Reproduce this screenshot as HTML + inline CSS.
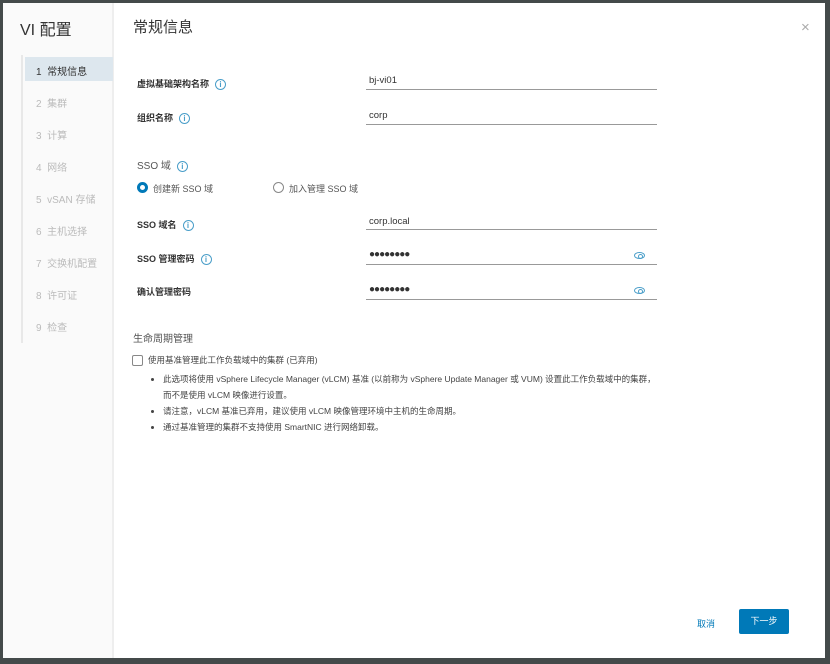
<!DOCTYPE html>
<html><head><meta charset="utf-8"><style>
*{margin:0;padding:0;box-sizing:border-box}
body{width:830px;height:664px;background:#444a4a;position:relative;overflow:hidden;font-family:"Liberation Sans","Noto Sans CJK SC",sans-serif;color:#333}
#dlg{position:absolute;left:3px;top:3px;width:822px;height:655px;background:#fff;overflow:hidden}
#in{position:absolute;left:-3px;top:-3px;width:830px;height:664px}
#side{position:absolute;left:3px;top:3px;width:111px;height:655px;background:#fafafa;border-right:2px solid #eee}
.a{position:absolute;white-space:nowrap}
.nav{position:absolute;left:33px;font-size:10px;color:#bbb}
.lbl{font-size:9px;font-weight:bold;color:#333}
.info{display:inline-block;width:11px;height:11px;border:1.3px solid #4a9ec9;border-radius:50%;color:#4a9ec9;font-size:8px;line-height:9px;text-align:center;vertical-align:middle;margin-left:6px;font-weight:bold}
.inp{position:absolute;left:366px;width:291px;height:1px;background:#999}
.val{position:absolute;left:369px;font-size:9.5px;color:#333}
.eye{position:absolute;left:634px;width:11px;height:7px;border:1.3px solid #4a9ec9;border-radius:50%}
.eye:after{content:"";position:absolute;left:2.5px;top:0.5px;width:3px;height:3px;border:1px solid #4a9ec9;border-radius:50%}
li{font-size:8.5px;color:#444;line-height:16px}
</style></head><body>
<div id="dlg"><div id="in">
<div id="side"></div>
<div class="a" style="left:20px;top:16px;font-size:16px;color:#333">VI 配置</div>
<div class="a" style="left:21px;top:55px;width:2px;height:288px;background:#e8e8e8"></div>
<div class="a" style="left:25px;top:57px;width:88px;height:24px;background:#dde7ee"></div>
<div class="nav" style="top:63px;color:#333;left:36px">1&nbsp;&nbsp;常规信息</div>
<div class="nav" style="top:95px;left:36px">2&nbsp;&nbsp;集群</div>
<div class="nav" style="top:127px;left:36px">3&nbsp;&nbsp;计算</div>
<div class="nav" style="top:159px;left:36px">4&nbsp;&nbsp;网络</div>
<div class="nav" style="top:191px;left:36px">5&nbsp;&nbsp;vSAN 存储</div>
<div class="nav" style="top:223px;left:36px">6&nbsp;&nbsp;主机选择</div>
<div class="nav" style="top:255px;left:36px">7&nbsp;&nbsp;交换机配置</div>
<div class="nav" style="top:287px;left:36px">8&nbsp;&nbsp;许可证</div>
<div class="nav" style="top:319px;left:36px">9&nbsp;&nbsp;检查</div>
<div class="a" style="left:133px;top:16px;font-size:15px;color:#333">常规信息</div>
<div class="a" style="left:801px;top:19px;font-size:15px;color:#aaa">×</div>

<div class="a lbl" style="left:137px;top:77px">虚拟基础架构名称<span class="info">i</span></div>
<div class="val" style="top:75px">bj-vi01</div><div class="inp" style="top:89px"></div>
<div class="a lbl" style="left:137px;top:111px">组织名称<span class="info">i</span></div>
<div class="val" style="top:110px">corp</div><div class="inp" style="top:124px"></div>

<div class="a" style="left:137px;top:157px;font-size:10px;color:#555">SSO 域<span class="info">i</span></div>
<div class="a" style="left:137px;top:182px;width:11px;height:11px;border-radius:50%;border:3.5px solid #0079b8"></div>
<div class="a" style="left:153px;top:182px;font-size:9px;color:#555">创建新 SSO 域</div>
<div class="a" style="left:273px;top:182px;width:11px;height:11px;border-radius:50%;border:1px solid #888"></div>
<div class="a" style="left:289px;top:182px;font-size:9px;color:#555">加入管理 SSO 域</div>

<div class="a lbl" style="left:137px;top:218px">SSO 域名<span class="info">i</span></div>
<div class="val" style="top:216px">corp.local</div><div class="inp" style="top:229px"></div>
<div class="a lbl" style="left:137px;top:252px">SSO 管理密码<span class="info">i</span></div>
<div class="val" style="top:249px;font-size:10px;letter-spacing:-1px">●●●●●●●●</div><div class="eye" style="top:252px"></div><div class="inp" style="top:264px"></div>
<div class="a lbl" style="left:137px;top:285px">确认管理密码</div>
<div class="val" style="top:284px;font-size:10px;letter-spacing:-1px">●●●●●●●●</div><div class="eye" style="top:287px"></div><div class="inp" style="top:299px"></div>

<div class="a" style="left:133px;top:330px;font-size:10px;color:#555">生命周期管理</div>
<div class="a" style="left:132px;top:355px;width:11px;height:11px;border:1px solid #888;border-radius:2px"></div>
<div class="a" style="left:148px;top:354px;font-size:8.5px;color:#444">使用基准管理此工作负载域中的集群 (已弃用)</div>
<ul class="a" style="left:160px;top:371px;width:500px;white-space:normal;padding-left:3px">
<li>此选项将使用 vSphere Lifecycle Manager (vLCM) 基准 (以前称为 vSphere Update Manager 或 VUM) 设置此工作负载域中的集群，而不是使用 vLCM 映像进行设置。</li>
<li>请注意，vLCM 基准已弃用，建议使用 vLCM 映像管理环境中主机的生命周期。</li>
<li>通过基准管理的集群不支持使用 SmartNIC 进行网络卸载。</li>
</ul>

<div class="a" style="left:697px;top:617px;font-size:9px;color:#0079b8">取消</div>
<div class="a" style="left:739px;top:609px;width:50px;height:25px;background:#0079b8;border-radius:2px;color:#fff;font-size:9px;text-align:center;line-height:25px">下一步</div>
</div></div>
</body></html>
